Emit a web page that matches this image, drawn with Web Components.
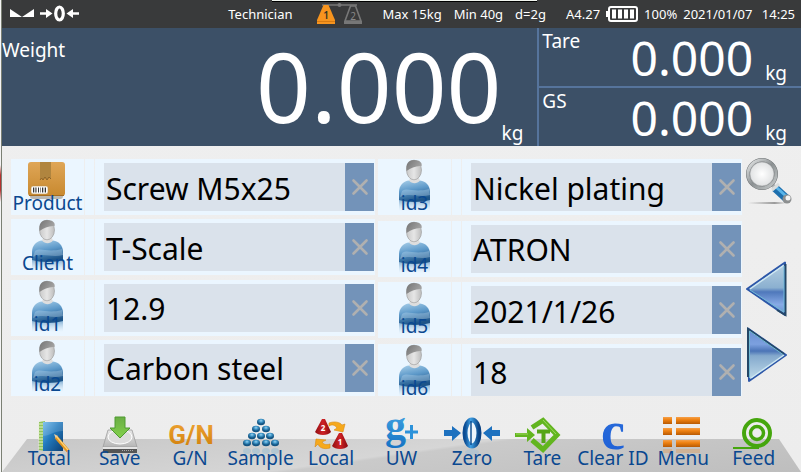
<!DOCTYPE html>
<html lang="en">
<head>
<meta charset="utf-8">
<meta name="viewport" content="width=device-width, initial-scale=1">
<title>Scale</title>
<style>
    html { background: #f4f4f4; }
    body {
        margin: 0;
        font-family: "Noto Sans", "Open Sans", sans-serif;
        color: #fff;
    }
</style>
</head>
<body>
<scale-app></scale-app>

<script>
// every drawing used on the screen, by name: [width, height, markup]
const ICONS = {
    level: [24, 10, `<path d="M0 0V8H24V0L12 8Z" fill="#fff"/>`],
    zeroed: [40, 18, `
        <path d="M0 8.500H9M31 8.500H39" stroke="#fff" stroke-width="2.500"/>
        <path d="M6 4L12.500 8.500L6 13ZM33 4L26.500 8.500L33 13Z" fill="#fff"/>
        <ellipse cx="19.500" cy="8.500" rx="3.800" ry="6.500" fill="none" stroke="#fff" stroke-width="3.200"/>`],
    platforms: [46, 22, `
        <path d="M5 2H40" stroke="#777" stroke-width="1.500"/><circle cx="22.500" cy="2" r="2" fill="#777"/>
        <path d="M6.500 2H11.500L18 17V21H0V17Z" fill="#f7941e"/>
        <path d="M0 18.500H18" stroke="#d87a10"/>
        <path d="M33.500 3H38.500L44 18H28Z" fill="none" stroke="#777" stroke-width="1.600"/>
        <path d="M27 18H45V21H27Z" fill="#777"/>
        <text x="9" y="16" font-size="10" font-weight="600" fill="#332" text-anchor="middle">1</text>
        <text x="36" y="17" font-size="10" fill="#888" text-anchor="middle">2</text>`],
    battery: [32, 16, `
        <rect x="3" y="1" width="28" height="14" rx="2" fill="none" stroke="#fff" stroke-width="2"/>
        <path d="M0 5H2V11H0Z" fill="#fff"/>
        <path d="M6 3.500H10V12.500H6ZM12 3.500H16V12.500H12ZM18 3.500H22V12.500H18ZM24 3.500H28V12.500H24Z" fill="#fff"/>`],
    close: [16, 16, `<path d="M1.500 1.500L14.500 14.500M14.500 1.500L1.500 14.500" stroke="#b0b0b0" stroke-width="2.600" stroke-linecap="round"/>`],
    box: [73, 56, `
        <defs><linearGradient id="b" x2="0" y2="1"><stop stop-color="#dfa657"/><stop offset="1" stop-color="#c8892f"/></linearGradient></defs>
        <rect x="19" y="34" width="33" height="6" rx="3" fill="#9a8f80" opacity=".6"/>
        <rect x="17" y="3" width="37" height="34" rx="3" fill="url(#b)"/>
        <path d="M18 36.500H53" stroke="#a66d22"/>
        <path d="M29 3H40V20L38 18L36 21L34 18L32 21L30.500 19L29 21Z" fill="#b0853f"/>
        <path d="M29 21L30.500 19L32 21L34 18L36 21L38 18L40 20" fill="none" stroke="#8d6429"/>
        <rect x="20" y="27" width="17" height="8" rx="2" fill="#fff" stroke="#b98d4a" stroke-width=".6"/>
        <path d="M22.500 28.500V33.500M25 28.500V33.500M27.500 28.500V33.500M31.500 28.500V33.500M34.500 28.500V33.500" stroke="#333"/>
        <path d="M24 28.500V33.500M29.500 28.500V33.500M33 28.500V33.500" stroke="#555" stroke-width=".7"/>`],
    person: [73, 56, `
        <defs>
            <linearGradient id="b" x2=".3" y2="1"><stop stop-color="#a9cfe9"/><stop offset=".5" stop-color="#5e9aca"/><stop offset="1" stop-color="#1d5488"/></linearGradient>
            <linearGradient id="h" x2="1" y2=".5"><stop stop-color="#747474"/><stop offset="1" stop-color="#a5a5a5"/></linearGradient>
            <linearGradient id="f" x2="1" y2="0"><stop stop-color="#c9c9c9"/><stop offset=".5" stop-color="#e6e6e6"/><stop offset="1" stop-color="#bdbdbd"/></linearGradient>
            <linearGradient id="r" x2="0" y2="1"><stop stop-color="#5c94c2" stop-opacity=".8"/><stop offset="1" stop-color="#bcd9ee" stop-opacity="0"/></linearGradient>
        </defs>
        <path d="M21 40H52V52H21Z" fill="url(#r)"/>
        <path d="M21 41V33C21 26 26 22 31 21.500H42C48 22 52 27 52 33V41C44 43.500 29 43.500 21 41Z" fill="url(#b)"/>
        <path d="M24 32C30 28 36 34 51 30L52 36C40 39 32 33 22 38Z" fill="#d4e8f6" opacity=".3"/>
        <path d="M31 21.500C34 25 39 25 42 21.500L40 17H33Z" fill="#dedede"/>
        <ellipse cx="36" cy="11" rx="7.500" ry="9.800" fill="url(#f)" stroke="#999" stroke-width=".6"/>
        <path d="M28.600 12C27.600 5 30 1 36 1C42 1 44.500 4 43.600 7C38 6.500 33 9 28.600 12Z" fill="url(#h)"/>`],
    search: [46, 50, `
        <defs>
            <linearGradient id="r" x2="1" y2="1"><stop stop-color="#e8eaea"/><stop offset=".5" stop-color="#8b9092"/><stop offset="1" stop-color="#c9cdcd"/></linearGradient>
            <radialGradient id="g"><stop stop-color="#fff"/><stop offset="1" stop-color="#dcdedf"/></radialGradient>
            <linearGradient id="s" x2="1" y2="0"><stop stop-color="#777" stop-opacity="0"/><stop offset=".7" stop-color="#777"/><stop offset="1" stop-color="#777" stop-opacity="0"/></linearGradient>
        </defs>
        <path d="M2 45H40V47H2Z" fill="url(#s)" opacity=".7"/>
        <path d="M24 26L31 32" stroke="#aeb3b5" stroke-width="4"/>
        <path d="M29 31L41 42" stroke="#1c6fae" stroke-width="8"/>
        <path d="M30 30L41 40" stroke="#59b5ea" stroke-width="3"/>
        <path d="M26 33L33 27" stroke="#d9dcdc" stroke-width="3"/>
        <circle cx="41" cy="42" r="4.500" fill="#8c8f90"/><circle cx="42" cy="41" r="2.500" fill="#f4f4f4"/>
        <circle cx="16" cy="17" r="14" fill="url(#g)" stroke="#6e7274" stroke-width="4"/>
        <circle cx="16" cy="17" r="14" fill="none" stroke="url(#r)" stroke-width="3"/>
        <circle cx="16" cy="17" r="12" fill="none" stroke="#a9acad" stroke-width=".7"/>`],
    prev: [42, 56, `
        <defs><linearGradient id="a" x2="0" y2="1"><stop stop-color="#b7d0e2"/><stop offset=".48" stop-color="#8bb0d0"/><stop offset=".56" stop-color="#4f78bb"/><stop offset=".8" stop-color="#87aae6"/><stop offset="1" stop-color="#6790c9"/></linearGradient></defs>
        <path d="M1 28L39 1.500V54Z" fill="url(#a)" stroke="#2d57a8" stroke-width="2" stroke-linejoin="round"/>
        <path d="M4 28L37.500 4.500" stroke="#cfe8f2" stroke-width="1.500"/>
        <path d="M39.500 3V54L31 49" fill="none" stroke="#244766" stroke-width="2"/>
        <path d="M38 5V51L4 29" fill="none" stroke="#71b9d4" stroke-width="1"/>`],
    next: [42, 56, `
        <defs><linearGradient id="a" x2="0" y2="1"><stop stop-color="#6a8ed0"/><stop offset=".3" stop-color="#7ca0df"/><stop offset=".43" stop-color="#4b74b6"/><stop offset=".52" stop-color="#84a9cd"/><stop offset="1" stop-color="#c3ddeb"/></linearGradient></defs>
        <path d="M2 1.500L40 28L3 54Z" fill="url(#a)" stroke="#2d57a8" stroke-width="2" stroke-linejoin="round"/>
        <path d="M2 50V2L38 27" fill="none" stroke="#244766" stroke-width="2"/>
        <path d="M3.500 51V4L37 27.500" fill="none" stroke="#71b9d4" stroke-width="1"/>
        <path d="M5 51L38 28" stroke="#cfe8f2" stroke-width="1.500"/>`],
    total: [70, 40, `
        <defs><linearGradient id="a" x2="1" y2="1"><stop stop-color="#6cb7ea"/><stop offset=".45" stop-color="#2179bd"/><stop offset="1" stop-color="#0d3f74"/></linearGradient></defs>
        <path d="M25 6L31 5V35L25 34Z" fill="#8fc45a"/>
        <path d="M24 8H30M24 11H30M24 14H30M24 17H30M24 20H30M24 23H30M24 26H30M24 29H30M24 32H30" stroke="#e7f0cf"/>
        <path d="M29 6H49V35H29Z" fill="url(#a)"/>
        <path d="M29 6H49V15C40 15 35 20 29 20Z" fill="#fff" opacity=".15"/>
        <path d="M42 21L54 35" stroke="#e2951f" stroke-width="3.500"/><path d="M42.500 20.500L54 34" stroke="#ffd377" stroke-width="1.200"/>
        <path d="M40 18L44 20L41.500 22Z" fill="#eccfa0"/>`],
    save: [70, 40, `
        <defs>
            <linearGradient id="a" x2="0" y2="1"><stop stop-color="#e8e8e8"/><stop offset="1" stop-color="#b5b5b5"/></linearGradient>
            <linearGradient id="g" x2="0" y2="1"><stop stop-color="#6aae45"/><stop offset="1" stop-color="#83d14c"/></linearGradient>
        </defs>
        <path d="M23 14H47L52 31H18Z" fill="url(#a)" stroke="#9d9d9d" stroke-width=".8"/>
        <ellipse cx="35" cy="21" rx="12" ry="7" fill="#dcdcdc" stroke="#fff"/>
        <path d="M18 31H52V37H18Z" fill="#555"/><path d="M18 31H52V33H18Z" fill="#e4e4e4"/>
        <path d="M37 34.500H49" stroke="#aaa" stroke-dasharray="1 1"/>
        <path d="M30 1H40V12H45L35 22L25 12H30Z" fill="url(#g)" stroke="#4e9a31"/>`],
    ratio: [70, 40, `
        <defs><linearGradient id="a" x2="0" y2="1"><stop stop-color="#efa535"/><stop offset="1" stop-color="#cf7d08"/></linearGradient></defs>
        <text x="36" y="28" text-anchor="middle" font-family="Liberation Sans Narrow, Roboto, Liberation Sans, sans-serif" font-size="26" font-weight="700" fill="url(#a)">G/N</text>`],
    sample: [70, 40, `
        <defs><radialGradient id="a" cy=".3"><stop stop-color="#9bd4f2"/><stop offset=".5" stop-color="#3c93c6"/><stop offset="1" stop-color="#145583"/></radialGradient></defs>
        ${[[35], [30, 40], [26, 35, 44], [21, 30, 40, 49]].map((row, i) =>
            row.map(x => `<ellipse cx="${x}" cy="${6 + i * 7}" rx="4" ry="3.200" fill="url(#a)"/>`).join("")).join("")}
        <g opacity=".25">${[21, 30, 40, 49].map(x => `<ellipse cx="${x}" cy="35" rx="4" ry="3" fill="#5aa7d2"/>`).join("")}</g>`],
    local: [70, 40, `
        <defs><linearGradient id="a" x2="1" y2="0"><stop stop-color="#8f0e12"/><stop offset=".5" stop-color="#cf2226"/><stop offset="1" stop-color="#860a0e"/></linearGradient></defs>
        <path d="M26 3H29L35 16C32 20 22 20 19 16Z" fill="url(#a)"/>
        <path d="M43 17H46L52 30C49 34 39 34 36 30Z" fill="url(#a)"/>
        <text x="27" y="15" font-size="8" font-weight="700" fill="#fff" text-anchor="middle">2</text>
        <text x="44" y="29" font-size="8" font-weight="700" fill="#fff" text-anchor="middle">1</text>
        <path d="M33 7C38 5 44 6 46 9L49 8L47 16L38 14L41 12C39 9 36 8 33 10Z" fill="#f6a91c" stroke="#d98a10" stroke-width=".6"/>
        <path d="M34 32C27 34 23 31 22 28L19 31L20 23L30 24L26 26C28 29 31 29 34 28Z" fill="#f6a91c" stroke="#d98a10" stroke-width=".6"/>`],
    unit: [70, 40, `
        <defs><linearGradient id="a" x2="0" y2="1"><stop stop-color="#4db0ea"/><stop offset="1" stop-color="#1573c4"/></linearGradient></defs>
        <text x="19" y="23" font-family="Liberation Serif, serif" font-size="42" font-weight="700" fill="url(#a)">g</text>
        <path d="M39 16H52M45.500 9V23" stroke="#2c92da" stroke-width="3"/>`],
    zero: [70, 40, `
        <defs><linearGradient id="a" x2="1" y2="0"><stop stop-color="#0b4c93"/><stop offset=".4" stop-color="#3fa0e4"/><stop offset="1" stop-color="#0a4283"/></linearGradient></defs>
        <ellipse cx="35" cy="17" rx="7" ry="13" fill="#eef5fb" stroke="url(#a)" stroke-width="5"/>
        <path d="M34 5V29" stroke="#114f92" stroke-width="1.500"/>
        <path d="M7 14H15V10L24 17L15 25V20H7Z" fill="#1d71bf"/>
        <path d="M63 14H55V10L46 17L55 25V20H63Z" fill="#1d71bf"/>
        <ellipse cx="35" cy="36" rx="7" ry="3" fill="#8cb9dd" opacity=".35"/>`],
    tare: [70, 40, `
        <path d="M25 11.500L36 4.500L50 19L36 33.500L25 24" fill="none" stroke="#62b51f" stroke-width="5"/>
        <path d="M8 17H20V12L28 19L20 26V21H8Z" fill="#62b51f"/>
        <path d="M30 15.500H43M36.500 15V27" stroke="#55a518" stroke-width="4"/>
        <path d="M9 18H21M36 4L49 18" stroke="#9bd85d"/>`],
    clear: [70, 40, `
        <defs><linearGradient id="a" x2="0" y2="1"><stop stop-color="#2c6fdc"/><stop offset="1" stop-color="#1d5fd6"/></linearGradient></defs>
        <text x="23" y="33" font-family="Liberation Serif, serif" font-size="54" font-weight="700" fill="url(#a)">c</text>`],
    menu: [70, 40, `
        <defs><linearGradient id="a" x2="0" y2="1"><stop stop-color="#f5a04a"/><stop offset=".4" stop-color="#ef8111"/><stop offset="1" stop-color="#b85a04"/></linearGradient></defs>
        <g fill="url(#a)">
            <path d="M15 1H24V8H15Z"/><path d="M28 1H52V8H28Z"/>
            <path d="M15 12H24V19H15Z"/><path d="M28 12H52V19H28Z"/>
            <path d="M15 24H24V31H15Z"/><path d="M28 24H52V31H28Z"/>
        </g>
        <path d="M15 33H24V37H15ZM28 33H52V37H28Z" fill="#ef8111" opacity=".25"/>`],
    feed: [70, 40, `
        <g fill="none" stroke="#45a60d">
            <circle cx="38" cy="17" r="13" stroke-width="4"/>
            <circle cx="38" cy="17" r="6.500" stroke-width="3.500"/>
            <path d="M14 32H40" stroke-width="2"/>
        </g>`],
}

class ScaleIcon extends HTMLElement {
    constructor() {
        super()
        this.attachShadow({ mode: "open" })
    }

    connectedCallback() {
        const [width, height, markup] = ICONS[this.getAttribute("name")]

        this.shadowRoot.innerHTML = `
        <style>
            :host { display: block; flex: none; }
            svg { display: block; overflow: visible; }
        </style>
        <svg width="${width}" height="${height}" viewBox="0 0 ${width} ${height}" aria-hidden="true">${markup}</svg>
        `
    }
}
customElements.define("scale-icon", ScaleIcon)


class StatusBar extends HTMLElement {
    constructor() {
        super()
        this.attachShadow({ mode: "open" })

        this.shadowRoot.innerHTML = `
        <style>
            :host {
                display: flex;
                align-items: center;
                gap: 20px;
                height: 28px;
                padding: 0 6px 0 8px;
                background: #393a3b;
                font-size: 13px;
                line-height: 28px;
                white-space: nowrap;
            }
            div { display: flex; align-items: center; gap: 6px; }
            .limits { gap: 12px; }
            .user { margin-left: auto; margin-right: 4px; }
        </style>
        <div><scale-icon name="level"></scale-icon><scale-icon name="zeroed"></scale-icon></div>
        <span class="user">Technician</span>
        <scale-icon name="platforms"></scale-icon>
        <div class="limits"><span>Max 15kg</span><span>Min 40g</span><span>d=2g</span></div>
        <div>
            <span>A4.27</span>
            <scale-icon name="battery"></scale-icon>
            <span>100%</span>
            <span>2021/01/07</span>
            <span>&nbsp;14:25</span>
        </div>
        `
    }
}
customElements.define("status-bar", StatusBar)


class WeightReadout extends HTMLElement {
    constructor() {
        super()
        this.attachShadow({ mode: "open" })
    }

    connectedCallback() {
        this.shadowRoot.innerHTML = `
        <style>
            :host {
                display: flex;
                padding: 0 14px 0 3px;
                font-size: 19px;
                line-height: 26px;
            }
            :host([large]) { padding-left: 0; }
            :host([large]) .title { padding-top: 9px; }
            .value {
                margin-left: auto;
                font-size: 48px;
                line-height: 60px;
            }
            .unit { align-self: flex-end; margin-left: 12px; }
            :host([large]) .value { font-size: 96px; line-height: 116px; }
            :host([large]) .unit { margin-left: 0; }
        </style>
        <span class="title">${this.getAttribute("label")}</span>
        <span class="value"><slot></slot></span>
        <span class="unit">${this.getAttribute("unit")}</span>
        `
    }
}
customElements.define("weight-readout", WeightReadout)


class FieldRow extends HTMLElement {
    constructor() {
        super()
        this.attachShadow({ mode: "open" })
    }

    connectedCallback() {
        const label = this.getAttribute("label")

        this.shadowRoot.innerHTML = `
        <style>
            :host {
                display: grid;
                grid-template-columns: 73px 9px minmax(0, 1fr);
                gap: 1px;
            }
            label, i, .field { background: #ebf6ff; }
            label {
                display: grid;
                height: 56px;
                color: #0a4890;
                font-size: 19px;
                line-height: 24px;
            }
            label > * { grid-area: 1 / 1; }
            label span { place-self: end center; z-index: 1; }
            .field { display: flex; padding: 4px 1px 4px 9px; }
            input {
                flex: 1;
                min-width: 0;
                height: 48px;
                box-sizing: border-box;
                border: 0;
                padding: 2px 2px 0;
                background: #dae2eb;
                color: #000;
                font: inherit;
                font-size: 30px;
            }
            button {
                display: grid;
                place-items: center;
                width: 29px;
                border: 0;
                padding: 0;
                background: #7393b9;
            }
            /* the last row of a column may end flush with its value */
            :host([flush]) label { height: 52px; }
            :host([flush]) .field { padding-bottom: 0; }
        </style>
        <label for="value"><scale-icon name="${this.getAttribute("icon") || "person"}"></scale-icon><span>${label}</span></label>
        <i></i>
        <div class="field">
            <input id="value" type="text" value="${this.getAttribute("value")}">
            <button type="button" aria-label="Clear ${label}"><scale-icon name="close"></scale-icon></button>
        </div>
        `

        const input = this.shadowRoot.querySelector("input")
        this.shadowRoot.querySelector("button").addEventListener("click", () => {
            input.value = ""
        })
    }
}
customElements.define("field-row", FieldRow)


class PageButtons extends HTMLElement {
    constructor() {
        super()
        this.attachShadow({ mode: "open" })

        this.shadowRoot.innerHTML = `
        <style>
            :host { display: flex; flex-direction: column; gap: 10px; }
            button { border: 0; padding: 0; background: none; }
            .search { margin-bottom: 44px; }
        </style>
        <button class="search" type="button" aria-label="Search"><scale-icon name="search"></scale-icon></button>
        <button type="button" aria-label="Previous page"><scale-icon name="prev"></scale-icon></button>
        <button type="button" aria-label="Next page"><scale-icon name="next"></scale-icon></button>
        `
    }
}
customElements.define("page-buttons", PageButtons)


class ToolButton extends HTMLElement {
    constructor() {
        super()
        this.attachShadow({ mode: "open" })
    }

    connectedCallback() {
        this.shadowRoot.innerHTML = `
        <style>
            :host { display: block; min-width: 0; }
            button {
                display: grid;
                justify-content: center;
                justify-items: center;
                width: 100%;
                height: 56px;
                border: 0;
                padding: 0;
                background: none;
                color: #0a4890;
                font: inherit;
                font-size: 19px;
                line-height: 28px;
                white-space: nowrap;
            }
            button > * { grid-area: 1 / 1; }
            span { align-self: end; z-index: 1; }
        </style>
        <button type="button"><scale-icon name="${this.getAttribute("icon")}"></scale-icon><span><slot></slot></span></button>
        `
    }
}
customElements.define("tool-button", ToolButton)


class ToolBar extends HTMLElement {
    constructor() {
        super()
        this.attachShadow({ mode: "open" })

        this.shadowRoot.innerHTML = `
        <style>
            :host { display: grid; }
            .shelf, nav { grid-area: 1 / 1; }
            .shelf {
                align-self: end;
                height: 33px;
                background: linear-gradient(172deg, #c6c6c6 0%, #d6d6d6 48%, #cacaca 50%, #bebebe 100%);
                clip-path: polygon(25px 0, calc(100% - 22px) 0, 100% 100%, 0 100%);
            }
            nav {
                z-index: 1;
                display: grid;
                grid-auto-flow: column;
                grid-auto-columns: minmax(0, 1fr);
                padding: 0 12px;
            }
        </style>
        <div class="shelf"></div>
        <nav><slot></slot></nav>
        `
    }
}
customElements.define("tool-bar", ToolBar)


class ScaleApp extends HTMLElement {
    constructor() {
        super()
        this.attachShadow({ mode: "open" })

        this.shadowRoot.innerHTML = `
        <style>
            :host {
                display: flex;
                flex-direction: column;
                box-sizing: border-box;
                min-height: 100vh;
                position: relative;
                padding-left: 2px;
                background:
                    linear-gradient(#7b8074, #7b8074) 1px 0 / 1px 100% no-repeat,
                    linear-gradient(#f4f4f4 165px, #b5322f 175px, #b5322f 190px, #f4f4f4 202px) 0 0 / 1px 100% no-repeat,
                    linear-gradient(#efefef, #ededed);
            }
            /* edge of the window behind */
            .edge {
                position: absolute;
                top: 0;
                left: 34%;
                width: 33%;
                height: 1px;
                background: #f0f4ee;
                border-bottom: 1px solid #000;
            }
            .display {
                display: grid;
                grid-template-columns: minmax(0, 1fr) 33%;
                background: #3c5067;
            }
            .side {
                display: grid;
                grid-template-rows: 58px 58px;
                gap: 2px;
                background: #56749c;
                border-left: 2px solid #56749c;
            }
            .side weight-readout { background: #3c5067; }
            main {
                flex: 1;
                display: flex;
                padding: 11px 9px 20px;
            }
            .fields {
                flex: 1;
                display: grid;
                grid-template-columns: 1fr 1fr;
                gap: 3px;
                padding-top: 2px;
                margin-right: 4px;
            }
            .column {
                display: flex;
                flex-direction: column;
                justify-content: space-between;
            }
        </style>
        <div class="edge"></div>
        <status-bar></status-bar>
        <section class="display">
            <weight-readout large label="Weight" unit="kg">0.000</weight-readout>
            <div class="side">
                <weight-readout label="Tare" unit="kg">0.000</weight-readout>
                <weight-readout label="GS" unit="kg">0.000</weight-readout>
            </div>
        </section>
        <main>
            <div class="fields">
                <div class="column">
                    <field-row icon="box" label="Product" value="Screw M5x25"></field-row>
                    <field-row label="Client" value="T-Scale"></field-row>
                    <field-row label="id1" value="12.9"></field-row>
                    <field-row label="id2" value="Carbon steel"></field-row>
                </div>
                <div class="column">
                    <field-row label="id3" value="Nickel plating"></field-row>
                    <field-row label="id4" value="ATRON"></field-row>
                    <field-row label="id5" value="2021/1/26"></field-row>
                    <field-row flush label="id6" value="18"></field-row>
                </div>
            </div>
            <page-buttons></page-buttons>
        </main>
        <tool-bar>
            <tool-button icon="total">Total</tool-button>
            <tool-button icon="save">Save</tool-button>
            <tool-button icon="ratio">G/N</tool-button>
            <tool-button icon="sample">Sample</tool-button>
            <tool-button icon="local">Local</tool-button>
            <tool-button icon="unit">UW</tool-button>
            <tool-button icon="zero">Zero</tool-button>
            <tool-button icon="tare">Tare</tool-button>
            <tool-button icon="clear">Clear ID</tool-button>
            <tool-button icon="menu">Menu</tool-button>
            <tool-button icon="feed">Feed</tool-button>
        </tool-bar>
        `
    }
}
customElements.define("scale-app", ScaleApp)
</script>
</body>
</html>
